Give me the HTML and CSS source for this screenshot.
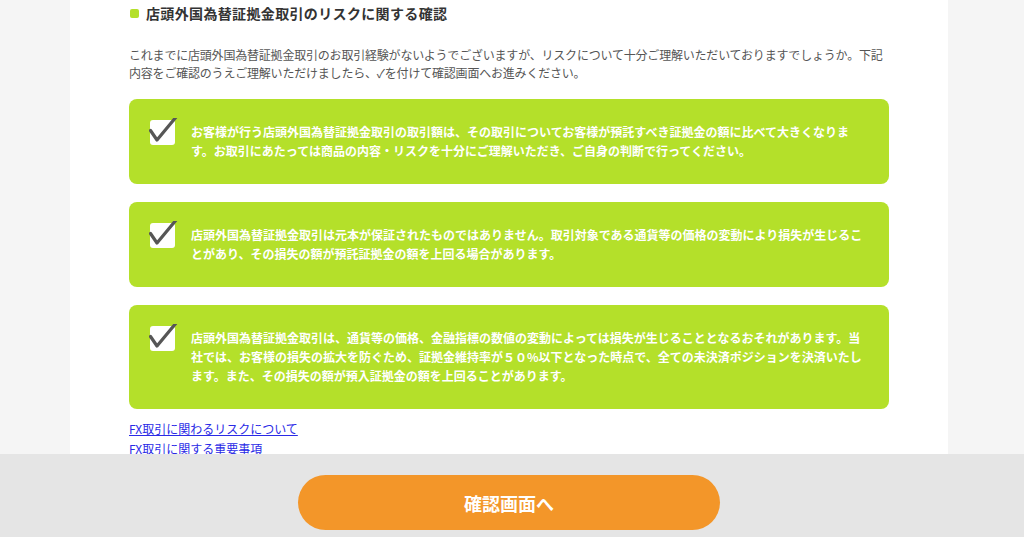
FILE: index.html
```html
<!DOCTYPE html>
<html lang="ja">
<head>
    <meta charset="UTF-8">
    <meta name="viewport" content="width=device-width, initial-scale=1.0">
    <title>店頭外国為替証拠金取引のリスクに関する確認</title>
    <link rel="stylesheet" href="styles.css">
</head>
<body>
    <div class="page">
        <main class="content">
            <h2 class="section-title">店頭外国為替証拠金取引のリスクに関する確認</h2>
            <p class="lead">これまでに店頭外国為替証拠金取引のお取引経験がないようでございますが、リスクについて十分ご理解いただいておりますでしょうか。下記内容をご確認のうえご理解いただけましたら、✓を付けて確認画面へお進みください。</p>

            <ul class="risk-list">
                <li class="risk-item">
                    <span class="check">
                        <svg viewBox="0 0 30 30" width="30" height="30"><path d="M1.5 12.5 L8 22 L27.5 -1.5" fill="none" stroke="#565656" stroke-width="3.2" stroke-linecap="round" stroke-linejoin="round"/></svg>
                    </span>
                    <p class="risk-text">お客様が行う店頭外国為替証拠金取引の取引額は、その取引についてお客様が預託すべき証拠金の額に比べて大きくなります。お取引にあたっては商品の内容・リスクを十分にご理解いただき、ご自身の判断で行ってください。</p>
                </li>
                <li class="risk-item">
                    <span class="check">
                        <svg viewBox="0 0 30 30" width="30" height="30"><path d="M1.5 12.5 L8 22 L27.5 -1.5" fill="none" stroke="#565656" stroke-width="3.2" stroke-linecap="round" stroke-linejoin="round"/></svg>
                    </span>
                    <p class="risk-text">店頭外国為替証拠金取引は元本が保証されたものではありません。取引対象である通貨等の価格の変動により損失が生じることがあり、その損失の額が預託証拠金の額を上回る場合があります。</p>
                </li>
                <li class="risk-item">
                    <span class="check">
                        <svg viewBox="0 0 30 30" width="30" height="30"><path d="M1.5 12.5 L8 22 L27.5 -1.5" fill="none" stroke="#565656" stroke-width="3.2" stroke-linecap="round" stroke-linejoin="round"/></svg>
                    </span>
                    <p class="risk-text">店頭外国為替証拠金取引は、通貨等の価格、金融指標の数値の変動によっては損失が生じることとなるおそれがあります。当社では、お客様の損失の拡大を防ぐため、証拠金維持率が５０%以下となった時点で、全ての未決済ポジションを決済いたします。また、その損失の額が預入証拠金の額を上回ることがあります。</p>
                </li>
            </ul>

            <ul class="doc-links">
                <li><a href="#">FX取引に関わるリスクについて</a></li>
                <li><a href="#">FX取引に関する重要事項</a></li>
            </ul>
        </main>
    </div>

    <footer class="action-bar">
        <button type="button" class="next-button">確認画面へ</button>
    </footer>
</body>
</html>
```

FILE: styles.css
```css
body {
    margin: 0;
    padding: 0;
    background-color: #f5f5f5;
    color: #555555;
    font-family: "Noto Sans CJK JP", "Noto Sans", sans-serif;
    font-size: 12px;
    height: 537px;
    overflow: hidden;
}

.page {
    display: flex;
    padding-left: 70px;
}

.content {
    width: 760px;
    padding: 3px 59px 0;
    background-color: #ffffff;
    min-height: 537px;
}

.section-title {
    display: flex;
    align-items: center;
    gap: 7px;
    margin: 0;
    padding-left: 1px;
    font-size: 14px;
    line-height: 20px;
    font-weight: bold;
    letter-spacing: 0.35px;
    color: #333333;
}

.section-title::before {
    content: "";
    width: 9px;
    height: 9px;
    border-radius: 2px;
    background-color: #b4e02a;
}

.lead {
    margin: 23px 0 17px;
    line-height: 18px;
    letter-spacing: -0.2px;
}

.risk-list {
    list-style: none;
    margin: 0;
    padding: 0;
    display: flex;
    flex-direction: column;
    gap: 18px;
}

.risk-item {
    display: flex;
    align-items: flex-start;
    gap: 16px;
    padding: 23px 0 24px 21px;
    background-color: #b4e02a;
    border-radius: 8px;
}

.check {
    position: relative;
    flex: 0 0 25px;
    height: 25px;
    margin-top: -2px;
    background-color: #ffffff;
    border-radius: 3px;
}

.check svg {
    position: absolute;
    left: -1px;
    top: -2px;
}

.risk-text {
    flex: 0 0 675px;
    margin: 0;
    color: #ffffff;
    font-weight: bold;
    line-height: 19px;
}

.doc-links {
    list-style: none;
    margin: 10px 0 0;
    padding: 0;
    line-height: 20px;
}

.doc-links a {
    color: #2a2ae6;
}

.action-bar {
    position: fixed;
    left: 0;
    right: 0;
    bottom: 0;
    height: 83px;
    background-color: #e5e5e5;
    display: flex;
    justify-content: center;
    padding: 21px 6px 0 0;
    box-sizing: border-box;
}

.next-button {
    width: 422px;
    height: 55px;
    border: none;
    border-radius: 28px;
    background-color: #f39629;
    color: #ffffff;
    font-family: "Noto Sans CJK JP", "Noto Sans", sans-serif;
    font-size: 18px;
    font-weight: bold;
    cursor: pointer;
}
```
